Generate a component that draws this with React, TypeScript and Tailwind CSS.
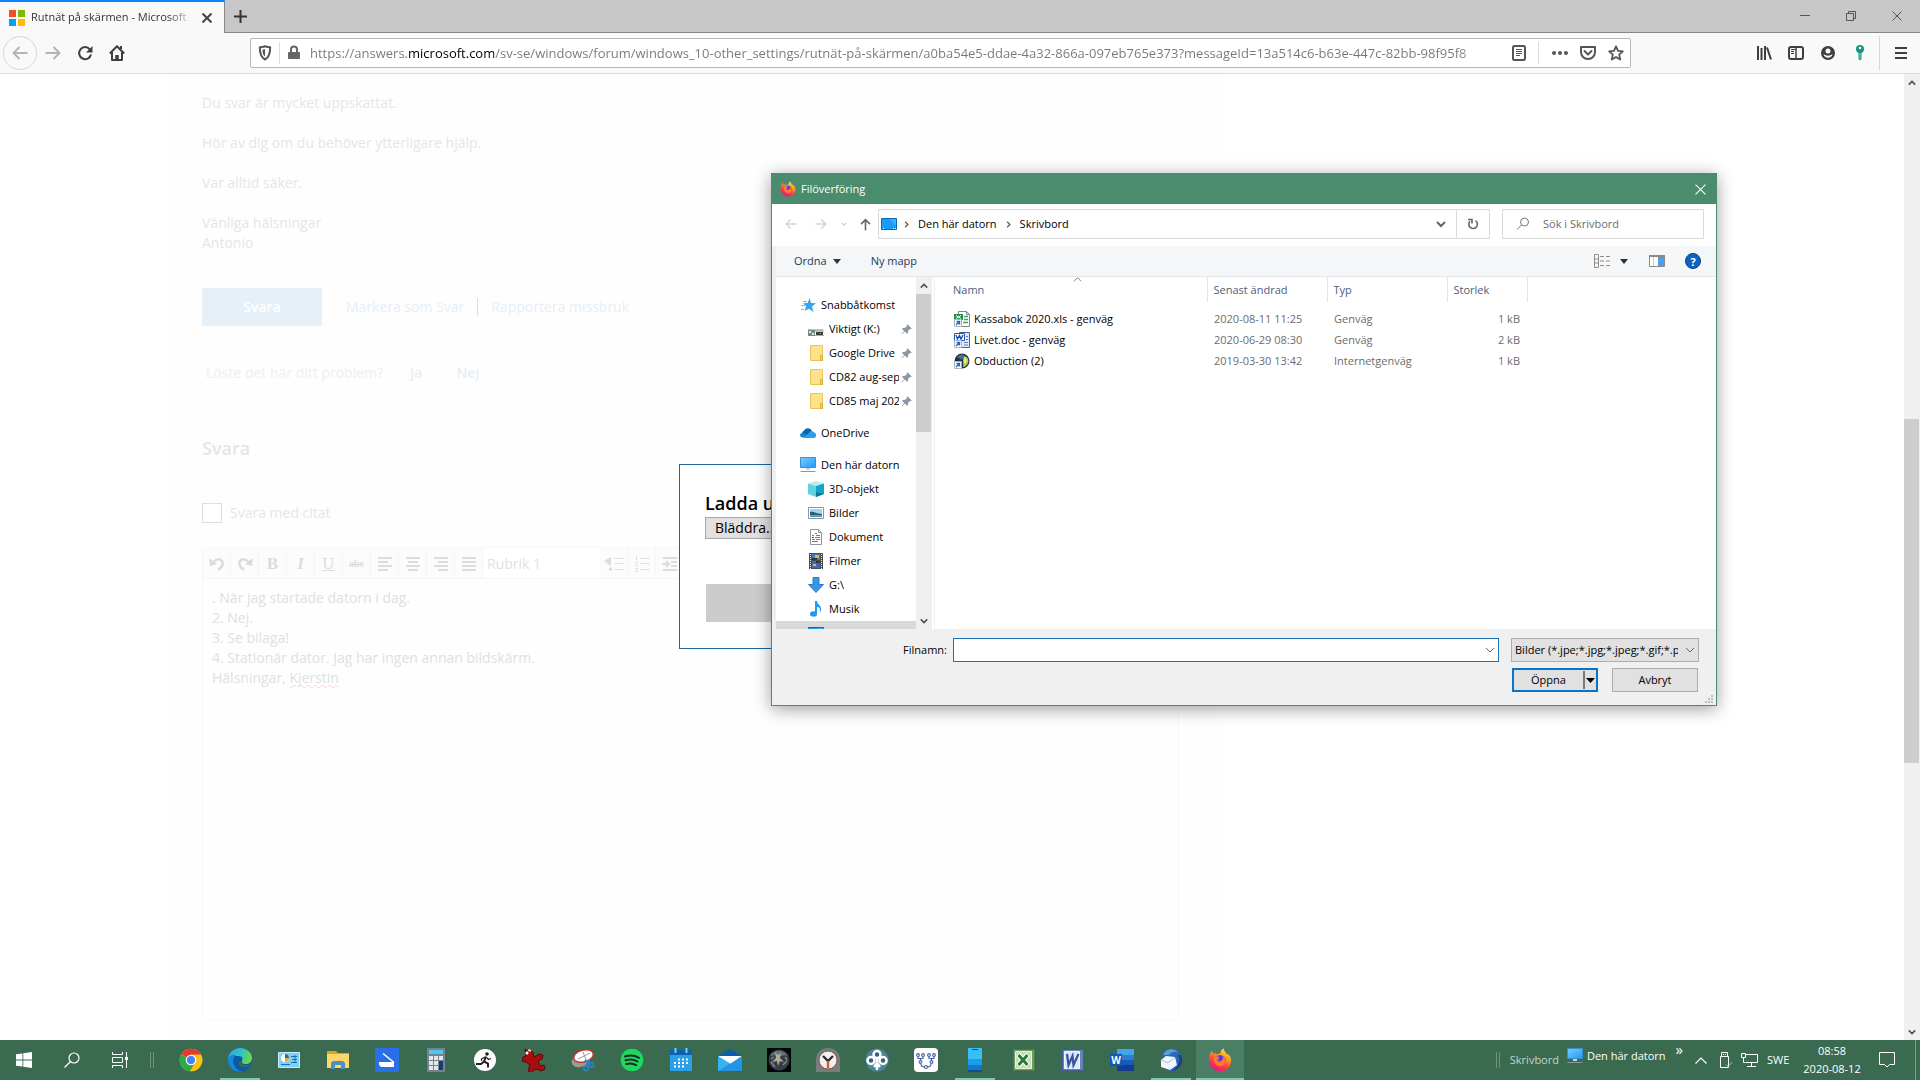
import { useState } from "react";
import type { ReactNode } from "react";

type FileRow = { name: string; modified: string; type: string; size: string; icon: ReactNode };
type NavRow = { label: string; icon: ReactNode; pinned?: boolean };
type TaskItem = { label: string; icon: ReactNode; open?: boolean; active?: boolean };

const URL_TEXT =
  "https://answers.microsoft.com/sv-se/windows/forum/windows_10-other_settings/rutnät-på-skärmen/a0ba54e5-ddae-4a32-866a-097eb765e373?messageId=13a514c6-b63e-447c-82bb-98f95f8";

/* ---------- small icons ---------- */

function Chevron({ dir, size = 10, color = "#555", width = 2 }: { dir: "up" | "down" | "right"; size?: number; color?: string; width?: number }) {
  const d = { up: "M1 7 5 3l4 4", down: "M1 3l4 4 4-4", right: "M3 1l4 4-4 4" }[dir];
  return (
    <svg width={size} height={size} viewBox="0 0 10 10" fill="none" stroke={color} strokeWidth={width} aria-hidden="true">
      <path d={d} />
    </svg>
  );
}

function Arrow({ dir, size = 16, color, width = 2 }: { dir: "left" | "right" | "up"; size?: number; color: string; width?: number }) {
  const d = {
    left: "M15.500 8H1.500M7.500 2 1.500 8l6 6",
    right: "M.5 8h14M8.500 2l6 6-6 6",
    up: "M8 15V2M2.500 7.500 8 2l5.500 5.500",
  }[dir];
  return (
    <svg width={size} height={size} viewBox="0 0 16 16" fill="none" stroke={color} strokeWidth={width} aria-hidden="true">
      <path d={d} />
    </svg>
  );
}

function CloseIcon({ size = 10, color, width = 1 }: { size?: number; color: string; width?: number }) {
  return (
    <svg width={size} height={size} viewBox="0 0 10 10" fill="none" stroke={color} strokeWidth={width} aria-hidden="true">
      <path d="M.5.5l9 9M9.500.5l-9 9" />
    </svg>
  );
}

function FirefoxIcon({ size = 24 }: { size?: number }) {
  return (
    <svg width={size} height={size} viewBox="0 0 24 24" aria-hidden="true">
      <defs>
        <linearGradient id="ffBody" x1="0.8" y1="0" x2="0.3" y2="1">
          <stop offset="0" stopColor="#fff044" />
          <stop offset=".35" stopColor="#ff9a1f" />
          <stop offset=".7" stopColor="#ff3647" />
          <stop offset="1" stopColor="#e31587" />
        </linearGradient>
      </defs>
      <path
        d="M22.500 9.500c-.6-1.700-1.800-3.400-3-4.100.6 1.200.9 2 1 2.800C18.500 4.500 15.800 3.400 15.500.2c-2.300 1.300-3 3.700-3.100 5-1.600.1-2.600.6-3.300 1-1.300-.3-1.700-1-2-1.600C6.500 5.300 6.300 6 6.300 6.800 5.300 5.700 4.200 4.200 3.900 2.800 2 4.800.8 8.600.9 12c.2 6.200 5 11.300 11.200 11.300 6.400 0 11-4.900 11-11 0-1-.2-2-.6-2.800z"
        fill="url(#ffBody)"
      />
      <circle cx="12" cy="12.500" r="5.400" fill="#7542e5" />
      <path d="M6 9c2.300-1 4.500-.6 5.800.6-.8 1.500-2.400 1-2.500 2.300 0 1.600 2.300 2.300 4 1.200 1.500-1 2-2.800.8-4.600 3.300 1.600 4 5.200 2.300 7.600-2.200 3-7.300 2.700-9.500-.6C5.500 13.300 5.300 11 6 9z" fill="#ff7a2a" />
      <path d="M11.500 7.500c1.800.2 3 1.600 2.800 3.100-.2 1.300-1.500 2-2.600 1.600z" fill="#5b2fd0" />
    </svg>
  );
}

function Monitor({ stand = true }: { stand?: boolean }) {
  return (
    <svg width="16" height="16" viewBox="0 0 16 16" aria-hidden="true">
      <defs>
        <linearGradient id="screen" x1="0" y1="0" x2="1" y2="1">
          <stop offset="0" stopColor="#7cc9ff" />
          <stop offset="1" stopColor="#1b9cf8" />
        </linearGradient>
      </defs>
      {stand ? (
        <>
          <path d="M.5.500h15v10H.5z" fill="url(#screen)" stroke="#3b8fcb" />
          <path d="M6 11h4v2H6z" fill="#c9d3da" />
          <path d="M.500 14h15v1H.5z" fill="#8b979f" />
        </>
      ) : (
        <>
          <path d="M.5 2.500h15v11H.5z" fill="#189cf6" stroke="#0b69b0" />
          <path d="M9 3h6v7z" fill="#3bb0fb" />
          <path d="M2 12.500h1M12 12.500h1M14 12.500h1" stroke="#fff" />
        </>
      )}
    </svg>
  );
}

const folder = (
  <svg width="16" height="16" viewBox="0 0 16 16" aria-hidden="true">
    <path d="M2.500.500h12v15h-12z" fill="#fde28a" stroke="#e8c55a" />
    <path d="M12.500 10.500h2v5h-2z" fill="#fbd667" stroke="#d9ae3c" />
  </svg>
);

const pin = (
  <svg width="11" height="11" viewBox="0 0 11 11" fill="#8d98a3" aria-hidden="true">
    <path d="M6.500.3 10.700 4.500 9.800 5.200 9 5 7.200 6.800 7 9 6 9.800 3.700 7.400.8 10.500.3 10.200 3.200 7 1 5l.8-1 2.300-.2L6 2 5.700 1.200z" />
  </svg>
);

/* ---------- navigation tree ---------- */

const quickAccess: NavRow[] = [
  {
    label: "Viktigt (K:)",
    pinned: true,
    icon: (
      <svg width="16" height="16" viewBox="0 0 16 16" aria-hidden="true">
        <path d="M0 8h15l1 3H0z" fill="#b9bfbc" />
        <path d="M0 9h7v6H0z" fill="#6f8f82" />
        <path d="M1 10h2v2H1zM4 12h2v2H4z" fill="#dfe9ee" />
        <path d="M8 11h7v3H8z" fill="#3a3f3c" />
        <path d="M7 14h9v1H7z" fill="#a9aeac" />
        <path d="M12 12h1v1h-1z" fill="#3fd05a" />
      </svg>
    ),
  },
  { label: "Google Drive", pinned: true, icon: folder },
  { label: "CD82 aug-sep", pinned: true, icon: folder },
  { label: "CD85 maj 202", pinned: true, icon: folder },
];

const thisPc: NavRow[] = [
  {
    label: "3D-objekt",
    icon: (
      <svg width="16" height="16" viewBox="0 0 16 16" aria-hidden="true">
        <path d="M0 2.500 8 0l8 2.500L8 5z" fill="#b6eef2" />
        <path d="M0 2.500 8 5v11l-8-3z" fill="#5fd3de" />
        <path d="M16 2.500 8 5v11l8-3z" fill="#13a5c4" />
        <path d="M8 11l8 2-8 3z" fill="#0b7896" />
      </svg>
    ),
  },
  {
    label: "Bilder",
    icon: (
      <svg width="16" height="16" viewBox="0 0 16 16" aria-hidden="true">
        <path d="M.5 2.500h15v11H.5z" fill="#fff" stroke="#8a969e" />
        <path d="M2 4h12v8H2z" fill="#a5d4ee" />
        <path d="M2 7c4-1 6 2 12 2v1H2z" fill="#2f5d74" />
        <path d="M2 10h12v2H2z" fill="#5e9ec2" />
      </svg>
    ),
  },
  {
    label: "Dokument",
    icon: (
      <svg width="16" height="16" viewBox="0 0 16 16" aria-hidden="true">
        <path d="M2.500.500h8l3 3v12h-11z" fill="#fff" stroke="#8a969e" />
        <path d="M10.500.5v3h3" fill="none" stroke="#8a969e" />
        <path d="M7 4.500h2M4 6.500h2M8 6.500h4M7 8.500h5M4 10.500h3M8 10.500h4M4 12.500h6" stroke="#2f8fd3" />
        <path d="M4 8.500h2" stroke="#1f5f9c" />
      </svg>
    ),
  },
  {
    label: "Filmer",
    icon: (
      <svg width="16" height="16" viewBox="0 0 16 16" aria-hidden="true">
        <path d="M1 0h14v16H1z" fill="#4b4b4b" />
        <path d="M2.500 1v15M13.500 1v15" stroke="#e8e8e8" strokeDasharray="1 1" />
        <path d="M4 1h8v6H4z" fill="#4a76c0" />
        <path d="M4 8h8v7H4z" fill="#3767c2" />
        <path d="M7 2h4v3H7zM5 11h3v2H5z" fill="#e0b93a" />
        <path d="M4 5h5v2H4zM8 8h4v2H8z" fill="#2b3c36" />
      </svg>
    ),
  },
  {
    label: "G:\\",
    icon: (
      <svg width="16" height="16" viewBox="0 0 16 16" aria-hidden="true">
        <path d="M5 .5h6v7h4.500L8 15.500.5 7.500H5z" fill="#3a96e4" stroke="#2b7fc9" />
      </svg>
    ),
  },
  {
    label: "Musik",
    icon: (
      <svg width="16" height="16" viewBox="0 0 16 16" fill="#1e9bf0" aria-hidden="true">
        <ellipse cx="5.500" cy="13" rx="3.500" ry="2.800" />
        <path d="M7 0h2c0 4 5 4 4 10-.4 1-1 1-1 0 .4-3-1-4-3-4v7H7z" />
      </svg>
    ),
  },
  { label: "Skrivbord", icon: <Monitor stand={false} /> },
];

function TreeRoot({ label, icon }: NavRow) {
  return (
    <button type="button" className="flex h-6 shrink-0 items-center gap-[5px] pl-6 text-left">
      {icon}
      <span className="whitespace-nowrap">{label}</span>
    </button>
  );
}

function TreeChild({ label, icon, pinned, selected }: NavRow & { selected?: boolean }) {
  return (
    <button
      type="button"
      className={`flex h-6 shrink-0 items-center pl-8 pr-1 text-left ${selected ? "bg-[#d9d9d9]" : ""}`}
    >
      <span className="shrink-0">{icon}</span>
      <span className="ml-[5px] min-w-0 flex-1 overflow-hidden whitespace-nowrap">{label}</span>
      {pinned ? <span className="ml-[2px] shrink-0">{pin}</span> : null}
    </button>
  );
}

/* ---------- file list ---------- */

const shortcut = (
  <>
    <path d="M.5 8.500h7v7h-7z" fill="#fff" stroke="#a9b6c4" />
    <path d="M2 14l3-3M2.500 10.500h3v3" stroke="#2b63b8" strokeWidth="1.400" fill="none" />
  </>
);

const files: FileRow[] = [
  {
    name: "Kassabok 2020.xls - genväg",
    modified: "2020-08-11 11:25",
    type: "Genväg",
    size: "1 kB",
    icon: (
      <svg width="16" height="16" viewBox="0 0 16 16" aria-hidden="true">
        <path d="M4.500.500h8l3 3v12h-11z" fill="#fff" stroke="#7d8a80" />
        <path d="M12.500.500v3h3" fill="none" stroke="#7d8a80" />
        <path d="M0 3h9v6H0z" fill="#1f8f4d" />
        <path d="M2 4.500l5 3M7 4.500l-5 3" stroke="#fff" />
        <path d="M10 5.500h4M10 8.500h4M9 11.500h5" stroke="#3aa564" strokeWidth="1.500" />
        {shortcut}
      </svg>
    ),
  },
  {
    name: "Livet.doc - genväg",
    modified: "2020-06-29 08:30",
    type: "Genväg",
    size: "2 kB",
    icon: (
      <svg width="16" height="16" viewBox="0 0 16 16" aria-hidden="true">
        <path d="M5.500.500h10v15h-10z" fill="#dfe9fb" stroke="#44669f" />
        <path d="M.5 1.500h10v7H.5z" fill="#fff" stroke="#2d55a5" />
        <path d="M2 3l1.500 4L5.500 3.500 7 7l2-4" stroke="#1d4fae" strokeWidth="1.400" fill="none" />
        <path d="M12 4.500h2M12 7.500h2M10 10.500h4M10 13h4" stroke="#5c80c4" />
        {shortcut}
      </svg>
    ),
  },
  {
    name: "Obduction (2)",
    modified: "2019-03-30 13:42",
    type: "Internetgenväg",
    size: "1 kB",
    icon: (
      <svg width="16" height="16" viewBox="0 0 16 16" aria-hidden="true">
        <circle cx="8" cy="8" r="7.500" fill="#1f3346" />
        <path d="M3 4c2-2 5-3 7-2L8 7z" fill="#4a6f8c" />
        <path d="M10 3c4 1 5 4 4 7-1 2-3 4-5 4 1-3-1-7 1-11z" fill="#b9cc48" />
        <path d="M11 4c2 2 2 5 0 7-1-2-1-5 0-7z" fill="#eef3a3" />
        {shortcut}
      </svg>
    ),
  },
];

function FileTable() {
  return (
    <div className="relative min-w-0 flex-1 border-l border-[#f0f0f0] bg-white">
      <span className="absolute left-[138px] top-[-2px]">
        <Chevron dir="up" size={9} color="#777" width={1} />
      </span>
      <table className="w-[592px] table-fixed border-collapse text-left">
        <colgroup>
          <col className="w-[272px]" />
          <col className="w-[120px]" />
          <col className="w-[120px]" />
          <col className="w-[80px]" />
        </colgroup>
        <thead>
          <tr className="h-[25px] text-[#4c607a]">
            <th className="border-r border-[#e5e5e5] pl-[18px] font-normal">Namn</th>
            <th className="border-r border-[#e5e5e5] pl-[6px] font-normal">Senast ändrad</th>
            <th className="border-r border-[#e5e5e5] pl-[6px] font-normal">Typ</th>
            <th className="border-r border-[#e5e5e5] pl-[6px] font-normal">Storlek</th>
          </tr>
        </thead>
        <tbody className="text-[#6d6d6d]">
          <tr className="h-[6px]" aria-hidden="true" />
          {files.map((f) => (
            <tr key={f.name} className="h-[21px]">
              <td className="py-0 pl-[19px]">
                <span className="flex items-center gap-1 whitespace-nowrap text-black">
                  {f.icon}
                  {f.name}
                </span>
              </td>
              <td className="whitespace-nowrap py-0 pl-[7px]">{f.modified}</td>
              <td className="whitespace-nowrap py-0 pl-[7px]">{f.type}</td>
              <td className="whitespace-nowrap py-0 pr-[7px] text-right">{f.size}</td>
            </tr>
          ))}
        </tbody>
      </table>
    </div>
  );
}

function FileDialog() {
  const [fileName, setFileName] = useState("");
  return (
    <section
      role="dialog"
      aria-label="Filöverföring"
      className="absolute left-[771px] top-[99px] flex w-[946px] flex-col border border-[#4c8c6e] bg-[#f0f0f0] text-[11px] leading-4 text-black shadow-[0_3px_16px_rgba(0,0,0,0.38)]"
    >
      <header className="flex h-[30px] items-center gap-[5px] bg-[#4c8c6e] pl-2 text-white">
        <FirefoxIcon size={16} />
        <h2 className="flex-1">Filöverföring</h2>
        <button type="button" aria-label="Stäng" className="flex h-full w-8 items-center justify-center">
          <CloseIcon size={11} color="#fff" />
        </button>
      </header>

      <div className="flex h-[42px] items-center bg-white pb-[2px] pl-[13px] pr-3">
        <button type="button" aria-label="Bakåt" className="mr-[18px]">
          <Arrow dir="left" size={12} color="#d5d5d5" />
        </button>
        <button type="button" aria-label="Framåt" className="mr-[14px]">
          <Arrow dir="right" size={12} color="#d5d5d5" />
        </button>
        <button type="button" aria-label="Senaste platser" className="mr-[12px]">
          <Chevron dir="down" size={6} color="#ccc" />
        </button>
        <button type="button" aria-label="Upp" className="mr-[6px]">
          <Arrow dir="up" size={13} color="#666" width={2} />
        </button>
        <div className="flex h-[30px] flex-1 items-center border border-[#d9d9d9] pl-[2px]">
          <Monitor stand={false} />
          <span className="ml-[6px] mr-2"><Chevron dir="right" size={7} color="#666" /></span>
          <button type="button">Den här datorn</button>
          <span className="mx-2"><Chevron dir="right" size={7} color="#666" /></span>
          <button type="button">Skrivbord</button>
          <button type="button" aria-label="Tidigare platser" className="ml-auto flex h-full w-[30px] items-center justify-center">
            <Chevron dir="down" size={10} color="#666" />
          </button>
          <button type="button" aria-label="Uppdatera" className="flex h-full w-[33px] items-center justify-center border-l border-[#d9d9d9]">
            <svg width="12" height="12" viewBox="0 0 12 12" fill="none" stroke="#666" strokeWidth="1.600" aria-hidden="true">
              <path d="M8.500 2.600A4.300 4.300 0 1 1 3 3.200" />
              <path d="M1 1.500h4v4" />
            </svg>
          </button>
        </div>
        <label className="ml-3 flex h-[30px] w-[202px] items-center border border-[#d9d9d9] pl-[13px]">
          <svg width="14" height="14" viewBox="0 0 14 14" fill="none" stroke="#777" aria-hidden="true">
            <circle cx="8.500" cy="5" r="4" />
            <path d="M5.500 8 1 12.500" />
          </svg>
          <input aria-label="Sök i Skrivbord" placeholder="Sök i Skrivbord" className="ml-[13px] min-w-0 flex-1 outline-none placeholder:text-[#6d6d6d]" />
        </label>
      </div>

      <div className="ml-1 flex h-[31px] items-center border-b border-[#e3e6ea] bg-[#f5f6f7] pl-[18px] pr-[15px] text-[#1e395b]">
        <button type="button" className="flex items-center gap-[6px]">
          Ordna
          <svg width="8" height="5" viewBox="0 0 8 5" fill="#1e395b" aria-hidden="true"><path d="M0 0h8L4 5z" /></svg>
        </button>
        <button type="button" className="ml-[30px]">Ny mapp</button>
        <button type="button" aria-label="Ändra vy" className="ml-auto flex items-center gap-[10px]">
          <svg width="16" height="14" viewBox="0 0 16 14" fill="none" stroke="#8f8f8f" aria-hidden="true">
            <path d="M.500.500h4v13h-4zM.5 5h4M.500 9h4M6 2.500h4M12 2.500h4M6 7h4M12 7h4M6 11.500h4M12 11.500h4" />
          </svg>
          <svg width="8" height="5" viewBox="0 0 8 5" fill="#1e2f4f" aria-hidden="true"><path d="M0 0h8L4 5z" /></svg>
        </button>
        <button type="button" aria-label="Förhandsgranskning" className="ml-[21px]">
          <svg width="16" height="12" viewBox="0 0 16 12" aria-hidden="true">
            <path d="M.5.5h15v11H.5z" fill="#fff" stroke="#8a8a8a" />
            <path d="M0 0h16v2H0z" fill="#8a8a8a" />
            <path d="M4.500 2v9" stroke="#c8c8c8" />
            <path d="M9 2h6v9H9z" fill="#4aa0ea" />
          </svg>
        </button>
        <button type="button" aria-label="Hjälp" className="ml-5 flex size-4 items-center justify-center rounded-full border border-[#0a3f80] bg-[#0a63c4] text-[11px] font-bold leading-none text-white">
          ?
        </button>
      </div>

      <div className="ml-1 flex h-[352px]">
        <nav aria-label="Navigeringsfönster" className="flex w-[140px] flex-col overflow-hidden bg-white pt-4">
          <TreeRoot
            label="Snabbåtkomst"
            icon={
              <svg width="16" height="16" viewBox="0 0 16 16" aria-hidden="true">
                <path d="M9.500 1l1.500 5 5 .3-4 3.200 1.500 5.500-4.500-3.200L4.500 14l1.700-4.800L3 6.300l4.800-.2z" fill="#35a4ea" />
                <path d="M3 4.500h4M1 8.500h4M1 12.500h3" stroke="#6fc0f0" />
              </svg>
            }
          />
          {quickAccess.map((n) => <TreeChild key={n.label} {...n} />)}
          <div className="mt-2 flex flex-col">
            <TreeRoot
              label="OneDrive"
              icon={
                <svg width="16" height="16" viewBox="0 0 16 16" aria-hidden="true">
                  <path d="M2 9a3.500 3.500 0 0 1 2-3.500 4.500 4.500 0 0 1 8 .5l-7 6z" fill="#0a63b8" />
                  <path d="M0 10.500C0 8.500 2 7.500 4 8l6 4.500H3A3 2.500 0 0 1 0 10.500z" fill="#1480d8" />
                  <path d="M3 13l6-5c1-2 4-2.500 5-.5 2 .5 2.500 2.500 2 3.500-.5 1.500-1 2-3 2z" fill="#2aa0ec" />
                </svg>
              }
            />
          </div>
          <div className="mt-2 flex flex-col">
            <TreeRoot label="Den här datorn" icon={<Monitor />} />
            {thisPc.map((n) => <TreeChild key={n.label} {...n} selected={n.label === "Skrivbord"} />)}
          </div>
        </nav>
        <div className="flex w-4 flex-col bg-[#f0f0f0]">
          <span className="flex h-[17px] w-[15px] items-center justify-center"><Chevron dir="up" size={8} color="#505050" width={2} /></span>
          <div className="h-[138px] w-[15px] bg-[#cdcdcd]" />
          <span className="mt-auto flex h-[17px] w-[15px] items-center justify-center"><Chevron dir="down" size={8} color="#505050" width={2} /></span>
        </div>
        <div className="w-[2px] bg-white" />
        <FileTable />
      </div>

      <form className="flex h-[76px] flex-col pl-[130px] pt-[9px]" onSubmit={(e) => e.preventDefault()}>
        <div className="flex items-center">
          <label htmlFor="filename" className="w-[51px] whitespace-nowrap pr-[6px] text-right">Filnamn:</label>
          <div className="relative flex flex-1">
            <input
              id="filename"
              value={fileName}
              onChange={(e) => setFileName(e.target.value)}
              className="h-6 w-full border border-[#1a73b8] bg-white pl-1 pr-5 outline-none"
            />
            <span className="pointer-events-none absolute right-1 top-[7px]"><Chevron dir="down" size={10} color="#666" width={1} /></span>
          </div>
          <div className="relative ml-3 mr-[17px] w-[188px]">
            <select aria-label="Filtyp" className="block h-6 w-full appearance-none border border-[#adadad] bg-[#e1e1e1] pl-[3px] pr-5 outline-none">
              <option>Bilder (*.jpe;*.jpg;*.jpeg;*.gif;*.png)</option>
            </select>
            <span className="pointer-events-none absolute right-1 top-[7px]"><Chevron dir="down" size={10} color="#666" width={1} /></span>
          </div>
        </div>
        <div className="mt-[6px] flex justify-end pr-[18px]">
          <div className="flex h-6 w-[86px] items-center border-2 border-[#0a74cc] bg-[#e1e1e1]">
            <button type="submit" className="h-full flex-1">Öppna</button>
            <button type="button" aria-label="Fler alternativ" className="flex h-[18px] w-[13px] items-center justify-center border-l-2 border-[#777]">
              <svg width="9" height="5" viewBox="0 0 9 5" aria-hidden="true"><path d="M0 0h9L4.500 5z" /></svg>
            </button>
          </div>
          <button type="button" className="ml-[14px] h-6 w-[86px] border border-[#adadad] bg-[#e1e1e1]">Avbryt</button>
        </div>
        <svg className="ml-auto mr-[2px] mt-[3px]" width="9" height="9" viewBox="0 0 9 9" fill="#bdbdbd" aria-hidden="true">
          <path d="M6 0h2v2H6zM3 3h2v2H3zM6 3h2v2H6zM0 6h2v2H0zM3 6h2v2H3zM6 6h2v2H6z" />
        </svg>
      </form>
    </section>
  );
}

/* ---------- browser chrome ---------- */

function TabStrip() {
  return (
    <div className="flex h-[33px] shrink-0 bg-[#c7c7c7]">
      <div className="flex w-[225px] items-center border-r border-t-2 border-r-[#888] border-t-[#0a84ff] bg-[#f9f9f9] pl-[9px] pr-3">
        <svg width="16" height="16" viewBox="0 0 16 16" aria-hidden="true">
          <path d="M0 0h7v7H0z" fill="#f25022" />
          <path d="M9 0h7v7H9z" fill="#7fba00" />
          <path d="M0 9h7v7H0z" fill="#00a4ef" />
          <path d="M9 9h7v7H9z" fill="#ffb900" />
        </svg>
        <span className="ml-[6px] min-w-0 flex-1 overflow-hidden whitespace-nowrap text-[11px] text-[#333] [mask-image:linear-gradient(to_right,#000_84%,transparent)]">
          Rutnät på skärmen - Microsoft
        </span>
        <button type="button" aria-label="Stäng flik" className="ml-[8px]">
          <CloseIcon size={10} color="#444" width={2} />
        </button>
      </div>
      <div className="flex flex-1 items-center border-b border-[#888]">
        <button type="button" aria-label="Ny flik" className="ml-[8px]">
          <svg width="15" height="15" viewBox="0 0 15 15" stroke="#333" strokeWidth="2" aria-hidden="true"><path d="M7.500 1v13M1 7.500h13" /></svg>
        </button>
        <div className="ml-auto flex">
          <button type="button" aria-label="Minimera" className="flex h-8 w-[46px] items-center justify-center">
            <svg width="10" height="10" viewBox="0 0 10 10" stroke="#555" aria-hidden="true"><path d="M0 4.500h10" /></svg>
          </button>
          <button type="button" aria-label="Återställ" className="flex h-8 w-[46px] items-center justify-center">
            <svg width="10" height="10" viewBox="0 0 10 10" fill="none" stroke="#555" aria-hidden="true"><path d="M.5 2.500h7v7h-7zM2.500 2.500v-2h7v7h-2" /></svg>
          </button>
          <button type="button" aria-label="Stäng" className="flex h-8 w-[46px] items-center justify-center">
            <CloseIcon color="#555" />
          </button>
        </div>
      </div>
    </div>
  );
}

function NavBar() {
  return (
    <div className="flex h-[41px] shrink-0 items-center border-b border-[#dadada] bg-[#f9f9f9] pr-[13px]">
      <button type="button" aria-label="Gå bakåt" className="ml-[3px] flex size-[34px] items-center justify-center rounded-full border border-[#d6d6d6]">
        <Arrow dir="left" color="#b4b4b4" />
      </button>
      <button type="button" aria-label="Gå framåt" className="ml-2"><Arrow dir="right" color="#b4b4b4" /></button>
      <button type="button" aria-label="Läs om sidan" className="ml-4">
        <svg width="16" height="16" viewBox="0 0 16 16" aria-hidden="true">
          <path d="M12.800 4.300A6 6 0 1 0 14 9.500" fill="none" stroke="#3f3f40" strokeWidth="2" />
          <path d="M15.500 1v6.500H9z" fill="#3f3f40" />
        </svg>
      </button>
      <button type="button" aria-label="Startsida" className="ml-4">
        <svg width="16" height="16" viewBox="0 0 16 16" fill="none" stroke="#3f3f40" strokeWidth="2" aria-hidden="true">
          <path d="M.800 8.500 8 1.300l7.200 7.200M3 7v8h10V7" strokeLinejoin="round" />
          <path d="M8 15v-5" strokeWidth="3.500" />
          <path d="M12 1v3" />
        </svg>
      </button>

      <div className="ml-[125px] flex h-[30px] min-w-0 flex-1 items-center rounded-[2px] border border-[#b9b9b9] bg-white pr-[6px]">
        <button type="button" aria-label="Spårningsskydd" className="ml-[7px]">
          <svg width="14" height="16" viewBox="0 0 14 16" aria-hidden="true">
            <path d="M7 1.200c2 .8 3.800 1 5.200 1 0 6-1 10-5.200 12.300C2.800 12.200 1.800 8.200 1.800 2.200c1.400 0 3.200-.2 5.200-1z" fill="none" stroke="#555" strokeWidth="2" strokeLinejoin="round" />
            <path d="M7 4v7.500C5 10 4.500 7.500 4.500 4.700z" fill="#555" />
          </svg>
        </button>
        <span className="mx-[7px] h-[22px] w-px bg-[#ddd]" />
        <button type="button" aria-label="Platsinformation">
          <svg width="14" height="16" viewBox="0 0 14 16" aria-hidden="true">
            <path d="M1.500 7.500h11v6h-11z" fill="#666" stroke="#666" strokeLinejoin="round" />
            <path d="M4 7V4.500a3 3 0 0 1 6 0V7" fill="none" stroke="#666" strokeWidth="2" />
          </svg>
        </button>
        <input
          aria-label="Adress"
          readOnly
          value={URL_TEXT}
          className="ml-[9px] min-w-0 flex-1 bg-[linear-gradient(to_right,#777_97px,#000_97px,#000_184px,#777_184px,#777_96%,#fff)] bg-clip-text pt-[2px] text-[13px] text-transparent outline-none"
        />
        <button type="button" aria-label="Läsarvy" className="ml-[7px]">
          <svg width="14" height="16" viewBox="0 0 14 16" fill="none" stroke="#555" aria-hidden="true">
            <rect x="1" y="1" width="12" height="14" rx="1.500" strokeWidth="2" />
            <path d="M4 4.500h6M4 6.500h6M4 8.500h6M4 10.500h4" />
          </svg>
        </button>
        <span className="ml-3 mr-[13px] h-[22px] w-px bg-[#ddd]" />
        <button type="button" aria-label="Sidåtgärder">
          <svg width="16" height="4" viewBox="0 0 16 4" fill="#555" aria-hidden="true"><circle cx="2" cy="2" r="2" /><circle cx="8" cy="2" r="2" /><circle cx="14" cy="2" r="2" /></svg>
        </button>
        <button type="button" aria-label="Spara i Pocket" className="ml-3">
          <svg width="16" height="16" viewBox="0 0 16 16" fill="none" stroke="#555" strokeWidth="2" strokeLinejoin="round" aria-hidden="true">
            <path d="M1 2h14v5c0 4-3 7-7 7S1 11 1 7z" />
            <path d="M4.500 6 8 9.500 11.500 6" strokeLinecap="round" />
          </svg>
        </button>
        <button type="button" aria-label="Bokmärk sidan" className="ml-3">
          <svg width="16" height="16" viewBox="0 0 16 16" fill="none" stroke="#555" strokeWidth="1.800" strokeLinejoin="round" aria-hidden="true">
            <path d="M8 1.300l2 4.500 4.800.5-3.600 3.300 1 4.900L8 12l-4.200 2.500 1-4.900L1.200 6.300 6 5.800z" />
          </svg>
        </button>
      </div>

      <div className="ml-[125px] flex items-center gap-4">
        <button type="button" aria-label="Bibliotek">
          <svg width="16" height="16" viewBox="0 0 16 16" fill="none" stroke="#3f3f40" strokeWidth="2" aria-hidden="true"><path d="M2 1v14M5.500 3v12M9 1v14M11 2.500l4 12" /></svg>
        </button>
        <button type="button" aria-label="Sidofält">
          <svg width="16" height="16" viewBox="0 0 16 16" fill="none" stroke="#3f3f40" aria-hidden="true">
            <rect x="1" y="2" width="14" height="12" rx="2" strokeWidth="2" />
            <path d="M8 2v12" strokeWidth="1.500" />
            <path d="M3 4.500h4M3 6.500h3M3 8.500h3" />
          </svg>
        </button>
        <button type="button" aria-label="Konto">
          <svg width="16" height="16" viewBox="0 0 16 16" aria-hidden="true">
            <circle cx="8" cy="8" r="7" fill="#3f3f40" />
            <circle cx="8" cy="6" r="2.500" fill="#f9f9f9" />
            <path d="M3.500 9c2.500 2.300 6.500 2.300 9 0-.7 5-8.300 5-9 0z" fill="#f9f9f9" />
          </svg>
        </button>
        <button type="button" aria-label="Lösenord">
          <svg width="16" height="16" viewBox="0 0 16 16" aria-hidden="true">
            <circle cx="8" cy="4" r="4" fill="#14957f" />
            <path d="M6.500 6h3v8L8 15.500 6.500 14z" fill="#14957f" />
            <circle cx="8" cy="3" r="1.300" fill="#fff" />
            <path d="M8 8v6" stroke="#7fd0c0" />
          </svg>
        </button>
      </div>
      <span className="ml-[11px] h-[34px] w-px bg-[#d8d8d8]" />
      <button type="button" aria-label="Öppna menyn" className="ml-[15px]">
        <svg width="12" height="14" viewBox="0 0 12 14" stroke="#3f3f40" strokeWidth="2" aria-hidden="true"><path d="M0 2h12M0 7h12M0 12h12" /></svg>
      </button>
    </div>
  );
}

/* ---------- page under the overlay ---------- */

function EditorTool({ label, children }: { label: string; children: ReactNode }) {
  return (
    <button type="button" aria-label={label} className="flex h-full w-7 shrink-0 items-center justify-center border-r border-[#f5f5f5] pt-[2px] font-['Liberation_Serif',serif] text-[17px] text-[#dcdcdc]">
      {children}
    </button>
  );
}

function Lines({ d }: { d: string }) {
  return (
    <svg width="16" height="16" viewBox="0 0 16 16" fill="none" stroke="#dcdcdc" strokeWidth="2" aria-hidden="true">
      <path d={d} />
    </svg>
  );
}

function TurnArrow({ flip }: { flip?: boolean }) {
  return (
    <svg width="16" height="16" viewBox="0 0 16 16" className={flip ? "-scale-x-100" : ""} aria-hidden="true">
      <path d="M0 2l1 8 7-2z" fill="#dcdcdc" />
      <path d="M4 7c2-4 7-5 9-2s0 6-4 9" fill="none" stroke="#dcdcdc" strokeWidth="2.500" />
    </svg>
  );
}

function ThreadPage() {
  return (
    <main className="ml-[171px] w-[1048px] shrink-0 bg-[#fefefe] pl-[31px] pt-[19px] text-[14px] leading-5 text-[#e6e6e6]">
      <div className="flex flex-col gap-5">
        <p>Du svar är mycket uppskattat.</p>
        <p>Hör av dig om du behöver ytterligare hjälp.</p>
        <p>Var alltid säker.</p>
        <p>
          Vänliga hälsningar
          <br />
          Antonio
        </p>
      </div>

      <div className="mt-[35px] flex items-center">
        <button type="button" className="h-[38px] w-[120px] bg-[#e5f0f8] font-semibold text-white">Svara</button>
        <a href="#markera" className="ml-6 text-[#e5eff8]">Markera som Svar</a>
        <span className="mx-[13px] h-[18px] w-px bg-[#ddd]" />
        <a href="#rapportera" className="text-[#e5eff8]">Rapportera missbruk</a>
      </div>

      <div className="mt-[37px] flex pl-1">
        <p className="font-medium text-[#eee]">Löste det här ditt problem?</p>
        <button type="button" className="ml-[27px] font-semibold text-[#e5eff8]">Ja</button>
        <button type="button" className="ml-[34px] font-semibold text-[#e5eff8]">Nej</button>
      </div>

      <h2 className="mt-[51px] text-[18px] font-semibold leading-7 text-[#e6e6e6]">Svara</h2>

      <label className="mt-[41px] flex items-center gap-2">
        <input type="checkbox" className="size-5 appearance-none border border-[#dedede] bg-white" />
        Svara med citat
      </label>

      <div className="mr-10 mt-6 border border-[#f8f8f8]">
        <div className="flex h-[31px] border-b border-[#f6f6f6] bg-[#fcfcfc]">
          <EditorTool label="Ångra"><TurnArrow /></EditorTool>
          <EditorTool label="Gör om"><TurnArrow flip /></EditorTool>
          <EditorTool label="Fet"><b>B</b></EditorTool>
          <EditorTool label="Kursiv"><b><i>I</i></b></EditorTool>
          <EditorTool label="Understruken"><span className="underline">U</span></EditorTool>
          <EditorTool label="Genomstruken"><b className="text-[10px] line-through">abc</b></EditorTool>
          <EditorTool label="Vänsterjustera"><Lines d="M1 2h14M1 6h10M1 10h14M1 14h10" /></EditorTool>
          <EditorTool label="Centrera"><Lines d="M1 2h14M3 6h10M1 10h14M3 14h10" /></EditorTool>
          <EditorTool label="Högerjustera"><Lines d="M1 2h14M5 6h10M1 10h14M5 14h10" /></EditorTool>
          <EditorTool label="Marginaljustera"><Lines d="M1 2h14M1 6h14M1 10h14M1 14h14" /></EditorTool>
          <select aria-label="Format" className="w-[117px] appearance-none bg-white pl-1 pt-[2px] text-[#e2e2e2] outline-none">
            <option>Rubrik 1</option>
          </select>
          <EditorTool label="Punktlista">
            <svg width="20" height="16" viewBox="0 0 20 16" aria-hidden="true">
              <path d="M0 5l7-4v9z" fill="#dcdcdc" />
              <path d="M5 13h3" stroke="#dcdcdc" strokeWidth="3" />
              <path d="M10 2.500h10M10 7.500h10M10 13.500h10" stroke="#e2e2e2" />
            </svg>
          </EditorTool>
          <EditorTool label="Numrerad lista">
            <svg width="16" height="16" viewBox="0 0 16 16" aria-hidden="true">
              <path d="M2.500 0v4M1 7h3M1 9.500h3M1 12.500h3M1 15h3" stroke="#dcdcdc" />
              <path d="M6 2.500h10M6 7.500h10M6 13.500h10" stroke="#e2e2e2" />
            </svg>
          </EditorTool>
          <EditorTool label="Öka indrag"><Lines d="M1 2h14M0 8h7M4 5l3 3-3 3M9 6h6M9 10h6M1 14h14" /></EditorTool>
        </div>
        <div
          role="textbox"
          aria-label="Svar"
          aria-multiline="true"
          contentEditable
          suppressContentEditableWarning
          spellCheck={false}
          className="min-h-[440px] p-[9px] text-[#e0e0e0] outline-none"
        >
          <p>. När jag startade datorn i dag.</p>
          <p>2. Nej.</p>
          <p>3. Se bilaga!</p>
          <p>4. Stationär dator. Jag har ingen annan bildskärm.</p>
          <p>
            Hälsningar, <span className="underline decoration-[#fbd0d0] decoration-wavy decoration-1">Kjerstin</span>
          </p>
        </div>
      </div>
    </main>
  );
}

function UploadModal() {
  return (
    <section role="dialog" aria-label="Ladda upp" className="absolute left-[679px] top-[390px] flex h-[185px] w-[546px] flex-col items-start border border-[#1d659c] bg-white pl-[25px] pt-[24px] text-black">
      <h2 className="text-[18px] font-semibold leading-7">Ladda upp</h2>
      <button type="button" className="h-[22px] border border-[#a8a8a8] bg-[#e1e1e1] px-[9px] text-[14px] leading-5">Bläddra...</button>
      <button type="button" aria-label="Infoga" disabled className="ml-px mt-[45px] h-[38px] w-[120px] bg-[#ccc]" />
    </section>
  );
}

/* ---------- taskbar ---------- */

const tasks: TaskItem[] = [
  {
    label: "Chrome",
    icon: (
      <svg width="24" height="24" viewBox="0 0 24 24" aria-hidden="true">
        <circle cx="12" cy="12" r="11.300" fill="#fbc116" />
        <path d="M12 12 2.200 6.300A11.300 11.300 0 0 1 22 6.800H12z" fill="#e33b2e" />
        <path d="M2.200 6.300A11.300 11.300 0 0 0 11 23.300L16 15z" fill="#2da94f" />
        <path d="M12 6.800h10A11.300 11.300 0 0 1 11 23.300L16.500 14.600z" fill="#fbc116" />
        <circle cx="12" cy="12" r="5.300" fill="#fff" />
        <circle cx="12" cy="12" r="4.200" fill="#4285f4" />
      </svg>
    ),
  },
  {
    label: "Edge",
    open: true,
    icon: (
      <svg width="24" height="24" viewBox="0 0 24 24" aria-hidden="true">
        <defs>
          <linearGradient id="edgeTop" x1="0" y1="0" x2="1" y2="0.3">
            <stop offset="0" stopColor="#2aa8e8" />
            <stop offset=".6" stopColor="#35c2c8" />
            <stop offset="1" stopColor="#62d94e" />
          </linearGradient>
        </defs>
        <circle cx="12" cy="12" r="12" fill="#0c59a4" />
        <path d="M0 12C0 5 5.500 0 12 0s12 4.500 12 10c0 4-3 6-6 6-3.500 0-5-1.500-4-3 1-1.500 1-5-3.500-5S0 8 0 12z" fill="url(#edgeTop)" />
        <path d="M0 12c0-4 4-6 8-5-3 2-4 8-1 12 2 3 5 4 7 4.500C6 25 0 19 0 12z" fill="#1788d8" />
        <path d="M14 13c-1 2 .5 4 4 4 2 0 4-1 5-2-2 5-9 5-12 2-1.500-2 0-5 3-4z" fill="#3a6a50" />
      </svg>
    ),
  },
  {
    label: "Kontrollpanelen",
    icon: (
      <svg width="22" height="16" viewBox="0 0 22 16" aria-hidden="true">
        <path d="M.5.5h21v15H.5z" fill="#7fd0f7" stroke="#c6ebfb" />
        <circle cx="7" cy="6" r="4" fill="#fff" />
        <path d="M7 6V2a4 4 0 0 1 4 4z" fill="#1672b8" />
        <path d="M7 6h4a4 4 0 0 1-4 4z" fill="#f5a623" />
        <path d="M13 4.500h6M14 7.500h5M13 10.500h6M17 3v8M3 12.500h9" stroke="#1f6fae" />
      </svg>
    ),
  },
  {
    label: "Utforskaren",
    icon: (
      <svg width="24" height="20" viewBox="0 0 24 20" aria-hidden="true">
        <path d="M1 1h9l2 2h11v4H1z" fill="#e0a31a" />
        <path d="M1 4h22v14H1z" fill="#fdd768" />
        <path d="M5 19v-6l2-2h10l2 2v6h-4v-4H9v4z" fill="#4a8fc6" />
      </svg>
    ),
  },
  {
    label: "Skanner",
    icon: (
      <svg width="24" height="24" viewBox="0 0 24 24" aria-hidden="true">
        <path d="M0 0h24v24H0z" fill="#2a6fe8" />
        <path d="M8 5.500l11 9" stroke="#fff" strokeWidth="1.600" />
        <path d="M4 14h15v5H6l-2-2z" fill="#fff" />
      </svg>
    ),
  },
  {
    label: "Kalkylatorn",
    icon: (
      <svg width="18" height="24" viewBox="0 0 18 24" aria-hidden="true">
        <path d="M0 0h18v24H0z" fill="#76828c" />
        <path d="M2 2h14v4H2z" fill="#4cc9f2" />
        <path d="M2 8h4v4H2zM7 8h4v4H7zM12 8h4v4h-4zM2 13h4v4H2zM7 13h4v4H7zM2 18h4v4H2zM7 18h4v4H7z" fill="#e3e8ec" />
        <path d="M12 13h4v9h-4z" fill="#123f78" />
      </svg>
    ),
  },
  {
    label: "Löpning",
    icon: (
      <svg width="22" height="22" viewBox="0 0 22 22" aria-hidden="true">
        <circle cx="11" cy="11" r="11" fill="#fff" />
        <circle cx="13" cy="5" r="1.800" fill="#222" />
        <path d="M12 7.500l-2 5 4 2v4M10 12.500l-3 2.500H2" stroke="#222" strokeWidth="2" fill="none" />
        <path d="M11 8 7.500 10v2M12.500 8.500l2 2 2.500-1" stroke="#222" strokeWidth="1.200" fill="none" />
      </svg>
    ),
  },
  {
    label: "Irfan",
    icon: (
      <svg width="24" height="24" viewBox="0 0 24 24" aria-hidden="true">
        <path d="M3 1l4 2 4 1 1 5 5-3 4 1-1 4-4 2 2 5 4-1 1 4-4 2-4-2-3 1-3 3-3-2 2-6-4-3-4-1 1-4 3-1z" fill="#a90e0e" stroke="#5c0606" />
        <circle cx="5" cy="5" r="1.500" fill="#fff" />
        <path d="M6 2l3 1" stroke="#f3b8b8" strokeWidth="2" />
      </svg>
    ),
  },
  {
    label: "Skärmklippverktyget",
    icon: (
      <svg width="24" height="24" viewBox="0 0 24 24" aria-hidden="true">
        <ellipse cx="9" cy="13" rx="8.500" ry="6" fill="#9a9a9a" transform="rotate(-15 9 13)" />
        <ellipse cx="12.500" cy="8" rx="10" ry="6" fill="#fff" stroke="#c9352b" strokeWidth="1.500" transform="rotate(-15 12.500 8)" />
        <path d="M7 11l12-6M12 4l4 10" stroke="#999" />
        <path d="M14 12l5 5M18 12l-3 6" stroke="#2d86c9" strokeWidth="2" />
        <circle cx="20.500" cy="17" r="2.200" fill="none" stroke="#2d86c9" strokeWidth="1.500" />
        <circle cx="15" cy="20.500" r="2.200" fill="none" stroke="#2d86c9" strokeWidth="1.500" />
      </svg>
    ),
  },
  {
    label: "Spotify",
    icon: (
      <svg width="24" height="24" viewBox="0 0 24 24" aria-hidden="true">
        <circle cx="12" cy="12" r="11.300" fill="#1ed760" />
        <path d="M5 8.500c5-1.500 10-1 14 1.300M5.500 12.300c4.500-1.300 8.500-.8 12 1.200M6.200 16c3.500-1 7-.6 10 1.100" fill="none" stroke="#16301f" strokeWidth="2" strokeLinecap="round" />
      </svg>
    ),
  },
  {
    label: "Kalender",
    icon: (
      <svg width="22" height="24" viewBox="0 0 22 24" aria-hidden="true">
        <path d="M0 2h22v21H0z" fill="#2aa0e8" />
        <path d="M0 2h22v5H0z" fill="#0f62b0" />
        <path d="M5.500 0v5M16.500 0v5" stroke="#6fd0ff" strokeWidth="2" />
        <path d="M8 11.500h11M4 15h15M4 18.500h11" stroke="#fff" strokeWidth="2" strokeDasharray="2 2" />
      </svg>
    ),
  },
  {
    label: "E-post",
    icon: (
      <svg width="24" height="24" viewBox="0 0 24 24" aria-hidden="true">
        <path d="M0 8l12-7 12 7v3H0z" fill="#0f5cae" />
        <path d="M1 8h22v8H1z" fill="#fff" />
        <path d="M0 8l13 8L24 8v15H0z" fill="#36b2f2" />
        <path d="M24 8v15H0l13-8z" fill="#1a88dc" opacity=".7" />
      </svg>
    ),
  },
  {
    label: "Spel",
    icon: (
      <svg width="24" height="24" viewBox="0 0 24 24" aria-hidden="true">
        <path d="M0 0h24v24H0z" fill="#050505" />
        <circle cx="12" cy="12" r="10.500" fill="#323d46" />
        <path d="M3 8c3-6 13-8 18 0-5-2-6 1-9 0S7 7 3 8z" fill="#63727c" />
        <path d="M8 4l3 3 3-2-1 5 4 4-4-1-2 5-1-5-5 1 4-4z" fill="#b5ab93" />
        <path d="M4 14l4 5M16 17l4-4M7 9l-3 2M18 9l2 3" stroke="#7f8d8f" strokeWidth="1.500" />
      </svg>
    ),
  },
  {
    label: "Klocka",
    icon: (
      <svg width="24" height="24" viewBox="0 0 24 24" aria-hidden="true">
        <path d="M0 24V11a12 11 0 0 1 24 0v13z" fill="#777c7c" />
        <circle cx="12" cy="12" r="9" fill="#f1f1f1" stroke="#8f5a4f" />
        <path d="M12 13 7 8M12 13l5-5" stroke="#2b2b2b" strokeWidth="2.400" />
        <path d="M12 13v7" stroke="#e0532f" strokeWidth="2.400" />
      </svg>
    ),
  },
  {
    label: "Släktträd",
    icon: (
      <svg width="24" height="24" viewBox="0 0 24 24" aria-hidden="true">
        <circle cx="12" cy="12" r="11.500" fill="#4a8495" />
        <g fill="#356476" stroke="#fff" strokeWidth="2.500">
          <circle cx="12" cy="6.500" r="3.500" />
          <circle cx="6" cy="12.500" r="3.500" />
          <circle cx="18" cy="12.500" r="3.500" />
        </g>
        <path d="M12 10v12M9 19l3-4 3 4" stroke="#fff" strokeWidth="2.500" fill="none" />
      </svg>
    ),
  },
  {
    label: "Släktforskning",
    icon: (
      <svg width="24" height="24" viewBox="0 0 24 24" fill="none" stroke="#4560a8" strokeWidth="1.100" aria-hidden="true">
        <rect width="24" height="24" rx="4" fill="#fff" stroke="none" />
        <circle cx="4" cy="7" r="1.400" /><circle cx="9" cy="7" r="1.400" /><circle cx="15" cy="7" r="1.400" /><circle cx="20" cy="7" r="1.400" />
        <path d="M4 8.500v2h5v-2M15 8.500v2h5v-2M6.500 10.500v2M17.500 10.500v2M7 16c0 3 2 3 3.500 3M17 16c0 3-2 3-3.500 3" />
        <circle cx="12" cy="19" r="1.500" />
        <circle cx="6.500" cy="14" r="1.400" /><circle cx="17.500" cy="14" r="1.400" />
      </svg>
    ),
  },
  {
    label: "Din telefon",
    open: true,
    icon: (
      <svg width="14" height="24" viewBox="0 0 14 24" aria-hidden="true">
        <path d="M0 0h14v24H0z" fill="#38c0f5" />
        <path d="M0 11h14v6H0z" fill="#1d9be6" />
        <path d="M0 17h14v5H0z" fill="#1277cf" />
        <path d="M0 22h14v2H0z" fill="#0c4f94" />
        <path d="M4 1.500h6" stroke="#0c4f94" />
      </svg>
    ),
  },
  {
    label: "Excel 2003",
    icon: (
      <svg width="22" height="22" viewBox="0 0 22 22" aria-hidden="true">
        <path d="M.5.5h21v21H.5z" fill="#6f9a60" stroke="#4c7d3f" />
        <path d="M2.500 2.500h16v17h-16z" fill="#c5dcb9" stroke="#e8f2e2" />
        <path d="M5 5.500l10 11M15 5.500 5 16.500" stroke="#fff" strokeWidth="5" />
        <path d="M5.500 6l9 10M14.500 6l-9 10" stroke="#2c7d34" strokeWidth="3" />
      </svg>
    ),
  },
  {
    label: "Word 2003",
    icon: (
      <svg width="22" height="22" viewBox="0 0 22 22" aria-hidden="true">
        <path d="M.5.5h21v21H.5z" fill="#6482bb" stroke="#3d5c9c" />
        <path d="M2.500 2.500h15v17h-15z" fill="#dfe7f6" stroke="#f2f5fb" />
        <path d="M5 5l1.500 11 4-9 1 9 5-11" stroke="#35579f" strokeWidth="2.300" fill="none" />
      </svg>
    ),
  },
  {
    label: "Word",
    icon: (
      <svg width="24" height="24" viewBox="0 0 24 24" aria-hidden="true">
        <path d="M7 1h17v6H7z" fill="#41a5ee" />
        <path d="M7 7h17v5H7z" fill="#2b7cd3" />
        <path d="M7 12h17v5H7z" fill="#185abd" />
        <path d="M7 17h17v6H7z" fill="#103f91" />
        <path d="M0 6h12v12H0z" fill="#1755b5" />
        <text x="6" y="16" textAnchor="middle" fontSize="10" fontWeight="700" fill="#fff" fontFamily="Open Sans, sans-serif">W</text>
      </svg>
    ),
  },
  {
    label: "Thunderbird",
    open: true,
    icon: (
      <svg width="24" height="24" viewBox="0 0 24 24" aria-hidden="true">
        <path d="M3 9C4 2 12-1 18 2c6 4 6 13 1 18-3 3-7 4-10 3l7-9z" fill="#2a67b5" />
        <path d="M4 7C6 1 14-1 19 4c-5-1-8 1-9 3z" fill="#5aa0e0" />
        <path d="M2 12l5-4 9 1 2 8-7 5-9-3z" fill="#f3f6fa" />
        <path d="M3 12l6 3 7-6" stroke="#a9b8cc" fill="none" />
        <path d="M19 7c3 5 1 11-6 16 9-2 12-9 9-16z" fill="#1c3f86" />
      </svg>
    ),
  },
  { label: "Firefox", open: true, active: true, icon: <FirefoxIcon size={24} /> },
];

function Grip() {
  return <span className="h-4 w-1 border-x border-[#6f9480]" />;
}

function Taskbar() {
  return (
    <footer className="flex h-10 shrink-0 items-center bg-[#3a6a50] text-[11px] leading-4 text-white">
      <button type="button" aria-label="Start" className="flex h-full w-12 items-center justify-center">
        <svg width="16" height="16" viewBox="0 0 16 16" fill="#fff" aria-hidden="true">
          <path d="M0 2.300 6.500 1.400v6.200H0zM7.300 1.300 16 0v7.600H7.300zM0 8.400h6.500v6.200L0 13.700zM7.300 8.400H16V16l-8.700-1.200z" />
        </svg>
      </button>
      <button type="button" aria-label="Sök" className="flex h-full w-12 items-center justify-center">
        <svg width="16" height="16" viewBox="0 0 16 16" fill="none" stroke="#fff" strokeWidth="1.200" aria-hidden="true">
          <circle cx="10" cy="6" r="5" />
          <path d="M6.500 9.500.5 15.500" />
        </svg>
      </button>
      <button type="button" aria-label="Aktivitetsvyn" className="flex h-full w-12 items-center justify-center">
        <svg width="16" height="16" viewBox="0 0 16 16" fill="none" stroke="#fff" aria-hidden="true">
          <path d="M.5 0v2.500h10V0M.5 5.500h10v5H.5zM.5 16v-2.500h10V16M14.500 0v16" />
          <path d="M13 5h3v3h-3z" fill="#fff" stroke="none" />
        </svg>
      </button>
      <span className="ml-[6px] mr-[13px] flex"><Grip /></span>
      <div className="flex h-full gap-px">
        {tasks.map((t) => (
          <button
            key={t.label}
            type="button"
            aria-label={t.label}
            className={`relative flex h-full w-12 shrink-0 items-center justify-center ${t.active ? "bg-[#4a7f65]" : ""}`}
          >
            {t.icon}
            {t.open ? <span className={`absolute bottom-0 h-[2px] bg-[#83c9a5] ${t.active ? "w-full" : "w-10"}`} /> : null}
          </button>
        ))}
      </div>

      <div className="ml-auto flex h-full items-center">
        <Grip />
        <span className="ml-[10px] text-[#c4d6cc]">Skrivbord</span>
        <button type="button" className="mb-[9px] ml-2 flex items-center gap-1">
          <Monitor />
          Den här datorn
        </button>
        <span className="mb-[22px] ml-[10px] text-[15px]">»</span>
        <button type="button" aria-label="Visa dolda ikoner" className="ml-3">
          <svg width="12" height="7" viewBox="0 0 12 7" fill="none" stroke="#fff" strokeWidth="1.200" aria-hidden="true"><path d="M.5 6.500 6 1l5.500 5.500" /></svg>
        </button>
        <svg className="ml-3" width="14" height="16" viewBox="0 0 14 16" fill="none" stroke="#fff" aria-hidden="true">
          <path d="M2.500.500h6v4h-6zM1.500 4.500h8v11h-8z" />
          <path d="M4 2.500h1M6 2.500h1" />
          <path d="M7 12.500l2 2 4-4" stroke="#b8d0c3" />
        </svg>
        <svg className="ml-2" width="17" height="14" viewBox="0 0 17 14" fill="none" stroke="#fff" aria-hidden="true">
          <path d="M4.500 1.500h12v8h-12M.5.500h4v4h-4zM2.500 4.500v5h2M10.500 9.500v4M6 13.500h9" />
        </svg>
        <span className="ml-[9px] w-6">SWE</span>
        <time className="ml-[7px] flex w-[68px] flex-col items-center gap-[2px] text-center">
          <span>08:58</span>
          <span>2020-08-12</span>
        </time>
        <button type="button" aria-label="Meddelandecenter" className="ml-[13px]">
          <svg width="16" height="16" viewBox="0 0 16 16" fill="none" stroke="#fff" aria-hidden="true"><path d="M.5.500h15v12h-5L8 15l-2.500-2.500h-5z" /></svg>
        </button>
        <span className="ml-5 mr-1 h-10 w-px bg-[#7d9f8d]" />
      </div>
    </footer>
  );
}

export default function App() {
  return (
    <div className="flex h-screen flex-col overflow-hidden bg-white font-['Open_Sans','Noto_Sans',sans-serif]">
      <TabStrip />
      <NavBar />
      <div className="relative flex min-h-0 flex-1 overflow-hidden">
        <ThreadPage />
        <div className="ml-auto flex w-4 shrink-0 flex-col bg-[#f0f0f0]">
          <span className="flex h-[17px] w-[15px] items-center justify-center"><Chevron dir="up" size={8} color="#505050" width={2} /></span>
          <div className="mt-[328px] h-[344px] w-[15px] bg-[#cdcdcd]" />
          <span className="mt-auto flex h-[17px] w-[15px] items-center justify-center"><Chevron dir="down" size={8} color="#505050" width={2} /></span>
        </div>
        <UploadModal />
        <FileDialog />
      </div>
      <Taskbar />
    </div>
  );
}
